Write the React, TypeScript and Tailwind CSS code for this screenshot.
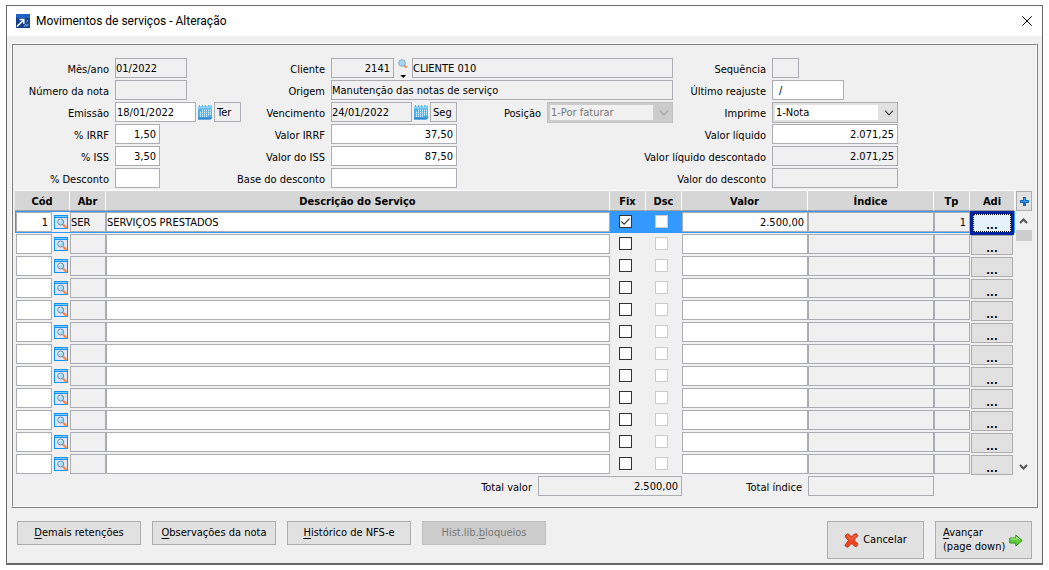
import React from 'react';
import clsx from 'clsx';

interface FieldProps {
  id: string;
  value?: string;
  className: string;
  readOnly?: boolean;
  right?: boolean;
  label?: string;
}

interface ServiceRow {
  code: string;
  abbr: string;
  description: string;
  fixed: boolean;
  value: string;
  type: string;
}

const emptyRow: ServiceRow = { code: '', abbr: '', description: '', fixed: false, value: '', type: '' };

const rows: ServiceRow[] = [
  { code: '1', abbr: 'SER', description: 'SERVIÇOS PRESTADOS', fixed: true, value: '2.500,00', type: '1' },
  ...Array.from({ length: 11 }, () => emptyRow),
];

const Field: React.FC<FieldProps> = ({ id, value = '', className, readOnly, right, label }) => (
  <input
    id={id}
    type="text"
    aria-label={label}
    defaultValue={value}
    readOnly={readOnly}
    className={clsx(
      'block h-5 border border-[#abadb3] outline-none',
      readOnly ? 'bg-[#f0f0f0]' : 'bg-white',
      right && 'pr-[3px] text-right',
      className
    )}
  />
);

const FormRow: React.FC<{ label: string; htmlFor: string; labelWidth: string; children: React.ReactNode }> = ({
  label,
  htmlFor,
  labelWidth,
  children,
}) => (
  <div className="flex h-[22px] items-start">
    <label
      htmlFor={htmlFor}
      className={clsx('mr-1.5 flex h-[22px] shrink-0 items-center justify-end pt-0.5 whitespace-nowrap', labelWidth)}
    >
      {label}
    </label>
    {children}
  </div>
);

const SelectBox: React.FC<{ id: string; option: string; disabled?: boolean }> = ({ id, option, disabled }) => (
  <div
    className={clsx(
      'relative h-[21px] w-[126px] shrink-0 border p-0.5',
      disabled ? 'border-[#bfbfbf] bg-[#cccccc]' : 'border-[#adadad] bg-[#e1e1e1]'
    )}
  >
    <select
      id={id}
      disabled={disabled}
      className={clsx(
        'block h-[15px] w-[103px] appearance-none pl-px leading-[15px] opacity-100 outline-none',
        disabled ? 'bg-[#f0f0f0] text-[#787878]' : 'bg-white'
      )}
    >
      <option>{option}</option>
    </select>
    <svg
      viewBox="0 0 10 6"
      className={clsx('pointer-events-none absolute top-[7px] right-[3px] h-1.5 w-2.5', disabled ? 'text-[#a0a0a0]' : 'text-[#404040]')}
      fill="none"
      stroke="currentColor"
    >
      <path d="M1 .7 5 4.8 9 .7" strokeWidth="1.2" />
    </svg>
  </div>
);

const CalendarButton: React.FC<{ label: string }> = ({ label }) => (
  <button type="button" aria-label={label} className="mt-0.5 ml-0.5 h-4 w-3.5 shrink-0">
    <svg viewBox="0 0 14 16" className="h-4 w-3.5">
      <path d="M0 2h14v12l-1.500 1.500H0z" fill="#55b0ea" />
      <path d="M0 13.500h14v.5l-1.500 1.500H0z" fill="#3288d0" />
      <rect x="0" y="2" width="14" height="2.500" fill="#8bd0f6" />
      <path d="M1.5 1v2M4.5 1v2M7.5 1v2M10.5 1v2M13 1v2" stroke="#62b5e9" />
      <path d="M4 6.500h9M2 8.500h11M2 10.500h11M2 12.500h7" stroke="#d9f3ff" strokeDasharray="1 1" />
      <path d="M4 5.500h9M2 7.500h11M2 9.500h11M2 11.500h9" stroke="#86cdf6" strokeDasharray="1 1" />
    </svg>
  </button>
);

const LookupIcon: React.FC = () => (
  <svg viewBox="0 0 14 14" className="h-3.5 w-3.5">
    <rect x=".5" y=".5" width="13" height="13" fill="#e4e2f8" stroke="#1094fa" />
    <rect x="0" y="0" width="14" height="3" fill="#1094fa" />
    <path d="M1 1.5h12" stroke="#7cc8fa" />
    <path d="m9 9.500 3.600 3.600" stroke="#ee8c52" strokeWidth="2.200" />
    <circle cx="6.700" cy="7" r="3" fill="#a8e0f8" stroke="#6f8ca6" />
    <path d="M5 7.2c0-1.200.7-1.900 1.800-2" stroke="#fff" fill="none" />
  </svg>
);

const ActionButton: React.FC<{ hotkey: string; before?: string; after: string; disabled?: boolean }> = ({
  hotkey,
  before,
  after,
  disabled,
}) => (
  <button
    type="button"
    disabled={disabled}
    className={clsx(
      'h-6 w-[124px] border whitespace-nowrap',
      disabled ? 'border-[#bfbfbf] bg-[#cccccc] text-[#787878]' : 'border-[#adadad] bg-[#e1e1e1]'
    )}
  >
    {before}
    <span className="underline underline-offset-2">{hotkey}</span>
    {after}
  </button>
);

const CheckBox: React.FC<{ label: string; checked?: boolean; disabled?: boolean }> = ({ label, checked, disabled }) => (
  <span className="relative ml-[9px] block h-[13px] w-[13px]">
    <input
      type="checkbox"
      aria-label={label}
      defaultChecked={checked}
      disabled={disabled}
      className={clsx('block h-[13px] w-[13px] appearance-none border bg-white', disabled ? 'border-[#cccccc]' : 'border-[#333333]')}
    />
    {checked && (
      <svg viewBox="0 0 13 13" className="pointer-events-none absolute inset-0 h-[13px] w-[13px]" fill="none">
        <path d="m2.3 6.4 2.8 2.8 5.5-5.500" stroke="#333" strokeWidth="1.200" />
      </svg>
    )}
  </span>
);

const headers = [
  { title: 'Cód', span: 2 },
  { title: 'Abr', span: 1 },
  { title: 'Descrição do Serviço', span: 1 },
  { title: 'Fix', span: 1 },
  { title: 'Dsc', span: 1 },
  { title: 'Valor', span: 1 },
  { title: 'Índice', span: 1 },
  { title: 'Tp', span: 1 },
  { title: 'Adi', span: 1 },
];

const ServiceTable: React.FC = () => (
  <div className="flex pl-0.5">
    <table className="min-w-0 flex-1 table-fixed border-separate border-spacing-0">
      <colgroup>
        <col className="w-[37px]" />
        <col className="w-[18px]" />
        <col className="w-9" />
        <col />
        <col className="w-9" />
        <col className="w-9" />
        <col className="w-[126px]" />
        <col className="w-[126px]" />
        <col className="w-9" />
        <col className="w-[45px]" />
      </colgroup>
      <thead>
        <tr>
          {headers.map((header) => (
            <th
              key={header.title}
              colSpan={header.span}
              className="h-[21px] border-t border-r border-b border-white border-b-[#a0a0a0] bg-[#d6d6d6] p-0 pt-0.5 text-center font-bold"
            >
              {header.title}
            </th>
          ))}
        </tr>
      </thead>
      <tbody>
        {rows.map((row, index) => {
          const selected = index === 0;
          const n = index + 1;
          const cell = clsx('p-0 align-top', selected ? 'border-y border-[#3399ff]' : 'pt-px');
          const iconCell = clsx('p-0 align-top', selected ? 'border-y border-[#3399ff] pt-[3px]' : 'pt-1');
          return (
            <tr key={index} className="h-[22px]">
              <td className={clsx(cell, selected ? 'border-l' : 'pl-px')}>
                <Field id={`code-${n}`} label={`Código ${n}`} value={row.code} right className="w-9" />
              </td>
              <td className={clsx(iconCell, 'pl-0.5')}>
                <button type="button" aria-label={`Localizar serviço ${n}`} className="block">
                  <LookupIcon />
                </button>
              </td>
              <td className={cell}>
                <Field id={`abbr-${n}`} label={`Abreviatura ${n}`} value={row.abbr} readOnly className="w-full" />
              </td>
              <td className={cell}>
                <Field id={`description-${n}`} label={`Descrição ${n}`} value={row.description} className="w-full" />
              </td>
              <td className={clsx(iconCell, selected && 'bg-[#3399ff]')}>
                <CheckBox label={`Fixo ${n}`} checked={row.fixed} />
              </td>
              <td className={clsx(iconCell, selected && 'bg-[#3399ff]')}>
                <CheckBox label={`Desconto ${n}`} disabled />
              </td>
              <td className={cell}>
                <Field id={`value-${n}`} label={`Valor ${n}`} value={row.value} right className="w-full" />
              </td>
              <td className={cell}>
                <Field id={`rate-${n}`} label={`Índice ${n}`} readOnly right className="w-full" />
              </td>
              <td className={cell}>
                <Field id={`type-${n}`} label={`Tipo ${n}`} value={row.type} readOnly right className="w-full" />
              </td>
              <td className={clsx('p-0 pl-px align-top', selected ? 'border-y border-r border-[#3399ff]' : 'pt-0.5')}>
                <button
                  type="button"
                  aria-label={`Adicionais ${n}`}
                  className={clsx(
                    'block w-[42px] font-bold',
                    selected
                      ? 'relative -mb-0.5 h-[22px] border-2 border-[#00249c] bg-[#e5f1fb] outline-1 outline-[#00249c]'
                      : 'h-5 border border-[#adadad] bg-[#e1e1e1]'
                  )}
                >
                  <span
                    className={clsx(
                      'flex h-full items-end justify-center leading-[10px]',
                      selected && 'border border-dotted border-black'
                    )}
                  >
                    ...
                  </span>
                </button>
              </td>
            </tr>
          );
        })}
      </tbody>
    </table>

    {/* Add button and scroll bar */}
    <div className="mr-1 flex w-[17px] shrink-0 flex-col pt-px">
      <button
        type="button"
        aria-label="Incluir"
        className="ml-px flex h-5 w-4 items-center justify-center border border-[#adadad] bg-[#e1e1e1]"
      >
        <svg viewBox="0 0 9 9" className="h-[9px] w-[9px]">
          <path d="M3 0h3v3h3v3H6v3H3V6H0V3h3z" fill="#1467bd" />
          <path d="M4 1h1v3h3v1H1V4h3z" fill="#35a0f2" />
        </svg>
      </button>
      <div className="flex flex-1 flex-col items-center">
        <svg viewBox="0 0 9 6" className="mt-[7px] mb-1.5 h-1.5 w-[9px]" fill="none" stroke="#555" strokeWidth="2">
          <path d="m1 5 3.5-3.5L8 5" />
        </svg>
        <div className="h-[11px] w-4 bg-[#cdcdcd]" />
        <svg viewBox="0 0 9 6" className="mt-auto mb-[5px] h-1.5 w-[9px]" fill="none" stroke="#555" strokeWidth="2">
          <path d="m1 1 3.5 3.5L8 1" />
        </svg>
      </div>
    </div>
  </div>
);

const HeaderForm: React.FC = () => (
  <div className="flex pt-[13px]">
    <div className="w-[228px] shrink-0">
      <FormRow label="Mês/ano" htmlFor="month" labelWidth="w-24">
        <Field id="month" value="01/2022" readOnly className="w-[72px]" />
      </FormRow>
      <FormRow label="Número da nota" htmlFor="number" labelWidth="w-24">
        <Field id="number" readOnly className="w-[72px]" />
      </FormRow>
      <FormRow label="Emissão" htmlFor="issue" labelWidth="w-24">
        <Field id="issue" value="18/01/2022" className="w-[81px] pl-px" />
        <CalendarButton label="Calendário de emissão" />
        <Field id="issue-day" label="Dia da emissão" value="Ter" readOnly className="ml-0.5 w-[27px] pl-0.5" />
      </FormRow>
      <FormRow label="% IRRF" htmlFor="irrf-rate" labelWidth="w-24">
        <Field id="irrf-rate" value="1,50" right className="w-[45px]" />
      </FormRow>
      <FormRow label="% ISS" htmlFor="iss-rate" labelWidth="w-24">
        <Field id="iss-rate" value="3,50" right className="w-[45px]" />
      </FormRow>
      <FormRow label="% Desconto" htmlFor="discount-rate" labelWidth="w-24">
        <Field id="discount-rate" right className="w-[45px]" />
      </FormRow>
    </div>

    <div className="min-w-0 flex-1">
      <FormRow label="Cliente" htmlFor="client" labelWidth="w-[84px]">
        <Field id="client" value="2141" readOnly right className="w-[63px] shrink-0" />
        <button type="button" aria-label="Localizar cliente" className="ml-1 h-5 w-2.5 shrink-0">
          <svg viewBox="0 0 10 20" className="h-5 w-2.5">
            <path d="m6 7 2.600 2.600" stroke="#f0955c" strokeWidth="2.400" />
            <circle cx="4" cy="5" r="3.300" fill="#9fd8f8" stroke="#8fa6b8" />
            <path d="M2.200 17h6L5.200 20z" fill="#000" />
          </svg>
        </button>
        <Field id="client-name" label="Nome do cliente" value="CLIENTE 010" readOnly className="ml-1 min-w-0 flex-1" />
      </FormRow>
      <FormRow label="Origem" htmlFor="source" labelWidth="w-[84px]">
        <Field id="source" value="Manutenção das notas de serviço" readOnly className="min-w-0 flex-1" />
      </FormRow>
      <FormRow label="Vencimento" htmlFor="due" labelWidth="w-[84px]">
        <Field id="due" value="24/01/2022" readOnly className="w-[81px]" />
        <CalendarButton label="Calendário de vencimento" />
        <Field id="due-day" label="Dia do vencimento" value="Seg" readOnly className="ml-0.5 w-[27px] pl-0.5" />
        <label htmlFor="position" className="mr-1.5 ml-auto flex h-[22px] items-center pt-0.5">
          Posição
        </label>
        <SelectBox id="position" option="1-Por faturar" disabled />
      </FormRow>
      <FormRow label="Valor IRRF" htmlFor="irrf" labelWidth="w-[84px]">
        <Field id="irrf" value="37,50" right className="w-[126px]" />
      </FormRow>
      <FormRow label="Valor do ISS" htmlFor="iss" labelWidth="w-[84px]">
        <Field id="iss" value="87,50" right className="w-[126px]" />
      </FormRow>
      <FormRow label="Base do desconto" htmlFor="discount-base" labelWidth="w-[84px]">
        <Field id="discount-base" right className="w-[126px]" />
      </FormRow>
    </div>

    <div className="mr-[138px] shrink-0">
      <FormRow label="Sequência" htmlFor="sequence" labelWidth="w-[93px]">
        <Field id="sequence" readOnly className="w-[27px]" />
      </FormRow>
      <FormRow label="Último reajuste" htmlFor="adjustment" labelWidth="w-[93px]">
        <Field id="adjustment" value="/" className="w-[72px] pl-1.5" />
      </FormRow>
      <FormRow label="Imprime" htmlFor="print" labelWidth="w-[93px]">
        <SelectBox id="print" option="1-Nota" />
      </FormRow>
      <FormRow label="Valor líquido" htmlFor="net" labelWidth="w-[93px]">
        <Field id="net" value="2.071,25" right className="w-[126px]" />
      </FormRow>
      <FormRow label="Valor líquido descontado" htmlFor="net-discounted" labelWidth="w-[93px]">
        <Field id="net-discounted" value="2.071,25" readOnly right className="w-[126px]" />
      </FormRow>
      <FormRow label="Valor do desconto" htmlFor="discount" labelWidth="w-[93px]">
        <Field id="discount" readOnly right className="w-[126px]" />
      </FormRow>
    </div>
  </div>
);

const App: React.FC = () => (
  <div className="bg-white pt-[5px] pr-1.5 pb-[5px] pl-1.5 font-['DejaVu_Sans_Condensed','DejaVu_Sans',sans-serif] text-[11px] leading-[14px] text-black">
    <main className="border border-b-2 border-[#66686b] bg-[#f0f0f0]">
      <header className="flex h-[30px] items-center bg-white pr-2.5 pl-[9px]">
        <svg viewBox="0 0 14 14" className="h-3.5 w-3.5">
          <rect width="14" height="14" fill="#123f8c" />
          <rect width="14" height="4" fill="#1f62c4" />
          <path d="M1 12.500 7.500 6M3.500 5.500h4.300v4.300" stroke="#fff" strokeWidth="1.600" fill="none" />
          <path d="m8 13 1.500-2.500M10.500 8.500 12 6M10.500 12.500l2.500-3M9 10l3 2" stroke="#8fb4e6" />
        </svg>
        <h1 className="ml-1.5 font-['Roboto','Open_Sans',sans-serif] text-[12px]">Movimentos de serviços - Alteração</h1>
        <button type="button" aria-label="Fechar" className="ml-auto">
          <svg viewBox="0 0 10 10" className="h-2.5 w-2.5" stroke="#000" fill="none">
            <path d="m.3.3 9.400 9.400M9.700.3.3 9.700" />
          </svg>
        </button>
      </header>

      <div className="px-1 pt-[7px]">
        <div className="border border-t-white border-r-[#808080] border-b-[#808080] border-l-white">
          <div className="border border-t-[#808080] border-r-white border-b-white border-l-[#808080]">
            <HeaderForm />
            <ServiceTable />
            <div className="flex h-[31px] items-start justify-end pt-px pr-[102px]">
              <label htmlFor="total-value" className="mr-1.5 flex h-[22px] items-center pt-0.5">
                Total valor
              </label>
              <Field id="total-value" value="2.500,00" readOnly right className="w-36" />
              <label htmlFor="total-rate" className="mr-1.5 flex h-[22px] w-[120px] items-center justify-end pt-0.5">
                Total índice
              </label>
              <Field id="total-rate" readOnly right className="w-[126px]" />
            </div>
          </div>
        </div>
      </div>

      <footer className="flex items-start gap-[11px] pt-[13px] pr-2.5 pb-1 pl-2.5">
        <ActionButton hotkey="D" after="emais retenções" />
        <ActionButton hotkey="O" after="bservações da nota" />
        <ActionButton hotkey="H" after="istórico de NFS-e" />
        <ActionButton before="Hist.lib." hotkey="b" after="loqueios" disabled />
        <button
          type="button"
          className="ml-auto flex h-[38px] w-[97px] items-center justify-center gap-1 border border-[#adadad] bg-[#e1e1e1]"
        >
          <svg viewBox="0 0 15 15" className="h-[15px] w-[15px]">
            <path
              d="M3.500.8C5.200 1 6.300 2.600 7.400 4.200 8.700 2.400 10.200.6 12.600.8l1.200 2.400c-1.500.7-2.800 2.300-3.600 3.900 1.300 1.200 2.800 2.500 3.800 4.100l-1.700 2.600c-1.900-.4-3.400-1.900-4.800-3.500-1.200 1.700-2.500 3.600-4.400 4L.8 12.500c1-1.600 2.400-3.300 3.500-5C3 6 1.700 4.800 1 3z"
              fill="#ef4520"
              stroke="#b92a12"
              strokeWidth=".8"
            />
            <path d="m3 2.500 4.400 4.200L12 2.200" stroke="#ff8a66" fill="none" />
          </svg>
          Cancelar
        </button>
        <button
          type="button"
          className="flex h-[38px] w-[97px] items-center justify-between border border-[#adadad] bg-[#e1e1e1] pr-2 pl-[7px] text-left whitespace-nowrap"
        >
          <span>
            <span className="underline underline-offset-2">A</span>vançar
            <br />
            (page down)
          </span>
          <svg viewBox="0 0 14 13" className="h-[13px] w-3.5 shrink-0">
            <path d="M.8 4h6V1l6.400 5.500L6.800 12V9h-6z" fill="#5fce38" stroke="#2f8f1e" />
            <path d="M1.500 5h6V3l3.500 3" stroke="#a8ee8a" fill="none" />
          </svg>
        </button>
      </footer>
    </main>
  </div>
);

export default App;
